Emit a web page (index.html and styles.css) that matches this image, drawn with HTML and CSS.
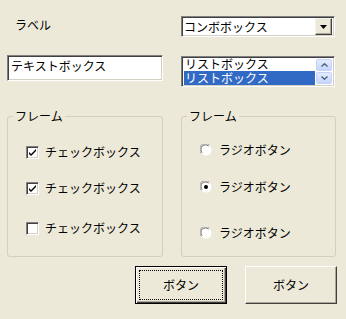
FILE: index.html
```html
<!DOCTYPE html>
<html lang="ja">

<head>
  <meta charset="UTF-8">
  <link rel="stylesheet" href="styles.css">
  <title>フォーム</title>
</head>

<body>
  <div class="dialog">
    <!-- row 1: label + combo -->
    <div class="row row-top">
      <div class="cell left"><span class="label">ラベル</span></div>
      <div class="cell right">
        <div class="combo">
          <span class="combo-text">コンボボックス</span>
          <span class="combo-btn">
            <svg width="7" height="4" viewBox="0 0 7 4"><path d="M0 0h7L3.5 4z" fill="#000"/></svg>
          </span>
        </div>
      </div>
    </div>

    <!-- row 2: textbox + listbox -->
    <div class="row row-mid">
      <div class="cell left">
        <div class="textbox">テキストボックス</div>
      </div>
      <div class="cell right">
        <div class="listbox">
          <div class="items">
            <div class="item">リストボックス</div>
            <div class="item selected">リストボックス</div>
          </div>
          <div class="scroll">
            <span class="sbtn">
              <svg width="7" height="4" viewBox="0 0 7 4"><path d="M0.5 3.5L3.5 0.8L6.5 3.5" fill="none" stroke="#4d6185" stroke-width="1.4"/></svg>
            </span>
            <span class="sbtn">
              <svg width="7" height="4" viewBox="0 0 7 4"><path d="M0.5 0.5L3.5 3.2L6.5 0.5" fill="none" stroke="#4d6185" stroke-width="1.4"/></svg>
            </span>
          </div>
        </div>
      </div>
    </div>

    <!-- row 3: frames -->
    <div class="row row-frames">
      <fieldset class="frame left">
        <legend>フレーム</legend>
        <div class="opt c1"><span class="check on"><svg width="9" height="9" viewBox="0 0 9 9"><path d="M1 4l2 2 5-5v2l-5 5-2-2z" fill="#000"/></svg></span>チェックボックス</div>
        <div class="opt c2"><span class="check on"><svg width="9" height="9" viewBox="0 0 9 9"><path d="M1 4l2 2 5-5v2l-5 5-2-2z" fill="#000"/></svg></span>チェックボックス</div>
        <div class="opt c3"><span class="check"></span>チェックボックス</div>
      </fieldset>
      <fieldset class="frame right">
        <legend>フレーム</legend>
        <div class="opt r1"><span class="radio"><svg width="12" height="12" viewBox="0 0 12 12"><circle cx="6" cy="6" r="5.5" fill="#fff"/><path d="M1.2 9.4A5.5 5.5 0 0 1 9.4 1.2" fill="none" stroke="#a0a0a0"/><path d="M2.2 8.6A4.5 4.5 0 0 1 8.6 2.2" fill="none" stroke="#6a6a6a"/></svg></span>ラジオボタン</div>
        <div class="opt r2"><span class="radio"><svg width="12" height="12" viewBox="0 0 12 12"><circle cx="6" cy="6" r="5.5" fill="#fff"/><path d="M1.2 9.4A5.5 5.5 0 0 1 9.4 1.2" fill="none" stroke="#a0a0a0"/><path d="M2.2 8.6A4.5 4.5 0 0 1 8.6 2.2" fill="none" stroke="#6a6a6a"/><circle cx="6" cy="6" r="2" fill="#000"/></svg></span>ラジオボタン</div>
        <div class="opt r3"><span class="radio"><svg width="12" height="12" viewBox="0 0 12 12"><circle cx="6" cy="6" r="5.5" fill="#fff"/><path d="M1.2 9.4A5.5 5.5 0 0 1 9.4 1.2" fill="none" stroke="#a0a0a0"/><path d="M2.2 8.6A4.5 4.5 0 0 1 8.6 2.2" fill="none" stroke="#6a6a6a"/></svg></span>ラジオボタン</div>
      </fieldset>
    </div>

    <!-- row 4: buttons -->
    <div class="row row-buttons">
      <div class="button default"><span class="focus">ボタン</span></div>
      <div class="button">ボタン</div>
    </div>
  </div>
</body>

</html>
```

FILE: styles.css
```css
body {
  margin: 0;
  background-color: #ece9d8;
  color: #000;
  font-family: "Noto Sans CJK JP", "Noto Sans", sans-serif;
  font-size: 12px;
  line-height: 14px;
}

.dialog {
  padding: 16px 0 0 7px;
  width: 346px;
  height: 319px;
  box-sizing: border-box;
}

.row {
  display: flex;
  gap: 18px;
}

.cell.left {
  width: 156px;
}

.cell.right {
  width: 154px;
}

/* row 1 */
.row-top {
  align-items: center;
}

.label {
  display: inline-block;
  padding-left: 8px;
  padding-bottom: 3px;
}

.combo {
  height: 21px;
  box-sizing: border-box;
  display: flex;
  align-items: center;
  background: #fff;
  border-top: 1px solid #808080;
  border-left: 1px solid #808080;
  border-right: 1px solid #fff;
  border-bottom: 1px solid #fff;
  box-shadow: inset 1px 1px 0 #404040, inset -1px -1px 0 #d4d0c8;
  padding: 0 2px 0 2px;
}

.combo-text {
  flex: 1;
}

.combo-btn {
  width: 17px;
  height: 17px;
  box-sizing: border-box;
  background: #ece9d8;
  border-top: 1px solid #f4f3ee;
  border-left: 1px solid #f4f3ee;
  border-right: 1px solid #404040;
  border-bottom: 1px solid #404040;
  box-shadow: inset -1px -1px 0 #aca899;
  display: flex;
  align-items: center;
  justify-content: center;
}

/* row 2 */
.row-mid {
  margin-top: 18px;
}

.textbox {
  height: 26px;
  box-sizing: border-box;
  background: #fff;
  border-top: 1px solid #808080;
  border-left: 1px solid #808080;
  border-right: 1px solid #fff;
  border-bottom: 1px solid #fff;
  box-shadow: inset 1px 1px 0 #404040, inset -1px -1px 0 #d4d0c8;
  padding: 3px 0 0 3px;
}

.listbox {
  margin-top: 1px;
  height: 31px;
  box-sizing: border-box;
  display: flex;
  background: #fff;
  border-top: 1px solid #808080;
  border-left: 1px solid #808080;
  border-right: 1px solid #fff;
  border-bottom: 1px solid #fff;
  box-shadow: inset 1px 1px 0 #404040, inset -1px -1px 0 #d4d0c8;
  padding: 0 2px 1px 2px;
}

.items {
  flex: 1;
}

.item {
  height: 14px;
  line-height: 14px;
  padding-left: 1px;
}

.item.selected {
  background: #316ac5;
  color: #fff;
}

.scroll {
  width: 16px;
  display: flex;
  flex-direction: column;
  gap: 1px;
  padding: 2px 0 1px 1px;
}

.sbtn {
  flex: 1;
  border: 1px solid #c3d3fd;
  border-radius: 2px;
  background: linear-gradient(#e4ebfd, #c6d5fb);
  display: flex;
  align-items: center;
  justify-content: center;
}

/* row 3: frames */
.row-frames {
  margin-top: 22px;
}

.frame {
  margin: 0;
  padding: 0 0 0 18px;
  border: 1px solid #d0d0bf;
  border-radius: 3px;
  height: 148px;
  box-sizing: border-box;
}

.frame.left {
  width: 156px;
}

.frame.right {
  width: 155px;
}

.frame legend {
  padding: 0 2px;
  margin-left: -13px;
  line-height: 14px;
}

.opt {
  display: flex;
  align-items: center;
  gap: 6px;
  height: 14px;
}

.c1 { margin-top: 22px; }
.c2 { margin-top: 22px; }
.c3 { margin-top: 26px; }

.r1 { margin-top: 20px; }
.r2 { margin-top: 23px; }
.r3 { margin-top: 32px; }

.check {
  width: 13px;
  height: 13px;
  box-sizing: border-box;
  background: #fff;
  border-top: 1px solid #808080;
  border-left: 1px solid #808080;
  border-right: 1px solid #fff;
  border-bottom: 1px solid #fff;
  box-shadow: inset 1px 1px 0 #404040, inset -1px -1px 0 #d4d0c8;
  display: flex;
  align-items: center;
  justify-content: center;
}

.radio {
  width: 12px;
  height: 12px;
  display: flex;
  margin-right: 1px;
}

/* row 4: buttons */
.row-buttons {
  margin-top: 9px;
  padding-left: 128px;
}

.button {
  width: 92px;
  height: 38px;
  box-sizing: border-box;
  background: #ece9d8;
  border-top: 1px solid #fff;
  border-left: 1px solid #fff;
  border-right: 1px solid #404040;
  border-bottom: 1px solid #404040;
  box-shadow: inset -1px -1px 0 #aca899;
  display: flex;
  align-items: center;
  justify-content: center;
}

.button.default {
  border: 1px solid #000;
  box-shadow: inset 1px 1px 0 #fff, inset -1px -1px 0 #404040, inset -2px -2px 0 #aca899;
  padding: 3px;
}

.focus {
  flex: 1;
  align-self: stretch;
  display: flex;
  align-items: center;
  justify-content: center;
  border: 1px dotted #000;
}
```
